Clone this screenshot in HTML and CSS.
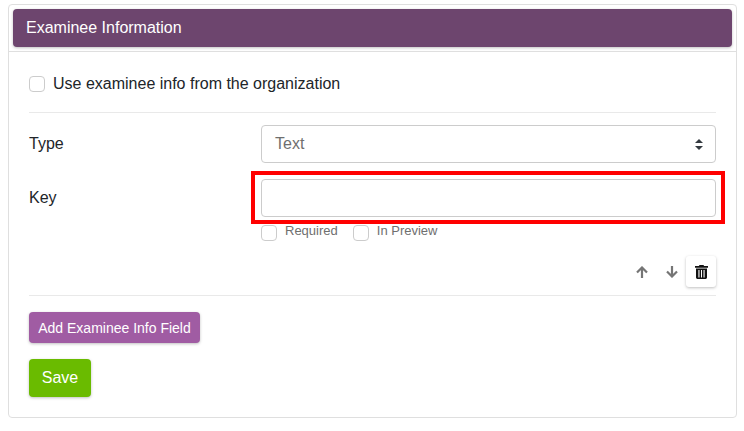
FILE: index.html
```html
<!DOCTYPE html>
<html lang="en">
<head>
    <meta charset="UTF-8">
    <meta name="viewport" content="width=device-width, initial-scale=1.0">
    <title>Examinee Information</title>
    <link rel="stylesheet" href="styles.css">
</head>
<body>
    <div class="card">
        <div class="card-top">
            <div class="card-header">Examinee Information</div>
        </div>
        <div class="card-body">
            <label class="org-check">
                <input type="checkbox">
                <span>Use examinee info from the organization</span>
            </label>

            <div class="field-block">
                <div class="form-row">
                    <label class="row-label">Type</label>
                    <div class="select-box">
                        <span>Text</span>
                        <svg class="select-arrows" width="8" height="11" viewBox="0 0 8 11"><path d="M4 0 L8 4 L0 4 Z M0 7 L8 7 L4 11 Z" fill="#343a40"/></svg>
                    </div>
                </div>
                <div class="form-row key-row">
                    <label class="row-label" for="key">Key</label>
                    <div class="key-field">
                        <div class="highlight"></div>
                        <input type="text" id="key" class="text-input">
                        <div class="key-options">
                            <label class="small-check"><input type="checkbox"><span>Required</span></label>
                            <label class="small-check"><input type="checkbox"><span>In Preview</span></label>
                        </div>
                    </div>
                </div>
                <div class="row-actions">
                    <button class="arrow-btn" type="button" aria-label="Move up">
                        <svg width="12" height="12" viewBox="0 0 12 12"><path d="M6 12 V1.5 M1 6.5 L6 1.5 L11 6.5" fill="none" stroke="#757575" stroke-width="2.2"/></svg>
                    </button>
                    <button class="arrow-btn" type="button" aria-label="Move down">
                        <svg width="12" height="12" viewBox="0 0 12 12"><path d="M6 0 V10.5 M1 5.5 L6 10.5 L11 5.5" fill="none" stroke="#757575" stroke-width="2.2"/></svg>
                    </button>
                    <button class="trash-btn" type="button" aria-label="Delete">
                        <svg width="13" height="14" viewBox="0 0 13 14"><path fill="#111" fill-rule="evenodd" d="M4.5 0 H8.5 L9.1 1 H13 V2.8 H0 V1 H3.9 Z M1 3.6 H12 V12.6 Q12 14 10.6 14 H2.4 Q1 14 1 12.6 Z M3.4 5 V12.6 H4.5 V5 Z M6 5 V12.6 H7 V5 Z M8.5 5 V12.6 H9.6 V5 Z"/></svg>
                    </button>
                </div>
            </div>

            <button class="btn btn-add" type="button">Add Examinee Info Field</button>
            <button class="btn btn-save" type="button">Save</button>
        </div>
    </div>
</body>
</html>
```

FILE: styles.css
```css
* {
    box-sizing: border-box;
}
body {
    font-family: "Liberation Sans", Arial, sans-serif;
    font-size: 16px;
    color: #212529;
    background: #fff;
    margin: 0;
    padding: 4px 7px 0 8px;
}
.card {
    height: 414px;
    border: 1px solid #dfdfdf;
    border-radius: 4px;
}
.card-top {
    padding: 4px 4px 4px;
    border-bottom: 1px solid #dfdfdf;
}
.card-header {
    height: 38px;
    padding: 0 13px;
    line-height: 37px;
    color: #fff;
    background-color: #6d456e;
    border-radius: 4px;
    box-shadow: 0 1px 3px rgba(0, 0, 0, 0.25);
}
.card-body {
    padding: 24px 20px 0;
}
.org-check {
    display: flex;
    align-items: center;
    height: 16px;
}
.org-check span {
    margin-left: 8px;
}
input[type="checkbox"] {
    appearance: none;
    width: 16px;
    height: 16px;
    margin: 0;
    background: #fff;
    border: 1px solid #ccc;
    border-radius: 4px;
}
.field-block {
    margin-top: 20px;
    padding: 12px 0 8px;
    border-top: 1px solid #e9e9e9;
    border-bottom: 1px solid #e9e9e9;
}
.form-row {
    display: flex;
    align-items: flex-start;
}
.key-row {
    margin-top: 16px;
}
.row-label {
    width: 232px;
    line-height: 38px;
}
.select-box {
    flex: 1;
    display: flex;
    align-items: center;
    justify-content: space-between;
    height: 38px;
    padding: 0 13px;
    color: #6f6f6f;
    border: 1px solid #ccc;
    border-radius: 4px;
}
.select-arrows {
    margin-right: -1px;
}
.key-field {
    flex: 1;
    position: relative;
}
.text-input {
    display: block;
    width: 100%;
    height: 38px;
    border: 1px solid #ccc;
    border-radius: 4px;
}
.highlight {
    position: absolute;
    top: -8px;
    left: -10px;
    right: -9px;
    height: 53px;
    border: 4px solid #f00;
}
.key-options {
    display: flex;
    gap: 15px;
    margin-top: 8px;
}
.small-check {
    display: flex;
    align-items: flex-start;
    font-size: 13px;
    color: #6f6f6f;
}
.small-check span {
    margin-left: 8px;
    margin-top: -2px;
}
.row-actions {
    display: flex;
    justify-content: flex-end;
    align-items: center;
    margin-top: 15px;
}
.arrow-btn {
    width: 30px;
    height: 31px;
    padding: 0 0 0 2px;
    border: none;
    background: none;
    display: flex;
    align-items: center;
    justify-content: center;
}
.trash-btn {
    width: 30px;
    height: 31px;
    padding: 0;
    border: none;
    background: #fff;
    border-radius: 3px;
    box-shadow: 0 1px 3px rgba(0, 0, 0, 0.25);
    display: flex;
    align-items: center;
    justify-content: center;
}
.btn {
    display: block;
    border: none;
    color: #fff;
    font-family: inherit;
    border-radius: 4px;
    box-shadow: 0 1px 3px rgba(0, 0, 0, 0.25);
}
.btn-add {
    margin-top: 16px;
    width: 171px;
    height: 31px;
    padding: 0;
    font-size: 14px;
    background-color: #a05ca3;
}
.btn-save {
    margin-top: 16px;
    width: 62px;
    height: 38px;
    padding: 0;
    font-size: 16px;
    background-color: #6abb00;
}
```
